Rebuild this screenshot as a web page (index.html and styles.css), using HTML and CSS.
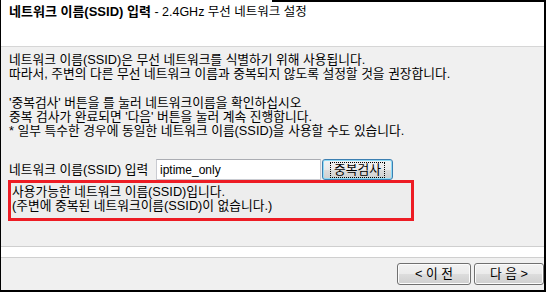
FILE: index.html
```html
<!DOCTYPE html>
<html lang="ko">
<head>
<meta charset="utf-8">
<link rel="stylesheet" href="styles.css">
</head>
<body>
<div class="window">
  <div class="header">
    <span class="title-b">네트워크 이름(SSID) 입력</span><span class="title-n"> - 2.4GHz 무선 네트워크 설정</span>
  </div>
  <div class="content">
    <p>네트워크 이름(SSID)은 무선 네트워크를 식별하기 위해 사용됩니다.<br>따라서, 주변의 다른 무선 네트워크 이름과 중복되지 않도록 설정할 것을 권장합니다.</p>
    <p>'중복검사' 버튼을 를 눌러 네트워크이름을 확인하십시오<br>중복 검사가 완료되면 '다음' 버튼을 눌러 계속 진행합니다.<br>* 일부 특수한 경우에 동일한 네트워크 이름(SSID)을 사용할 수도 있습니다.</p>
    <div class="ssid-row">
      <label class="ssid-label" for="ssid">네트워크 이름(SSID) 입력</label>
      <input class="ssid-input" id="ssid" type="text" value="iptime_only">
      <button class="btn btn-check" type="button"><span class="focus">중복검사</span></button>
    </div>
    <div class="result">사용가능한 네트워크 이름(SSID)입니다.<br>(주변에 중복된 네트워크이름(SSID)이 없습니다.)</div>
  </div>
  <div class="sep"></div>
  <div class="footer">
    <button class="btn btn-prev" type="button">&lt; 이 전</button>
    <button class="btn btn-next" type="button">다 음 &gt;</button>
  </div>
</div>
</body>
</html>
```
FILE: styles.css
```css
html, body {
  margin: 0;
  padding: 0;
  background: #ffffff;
}

.window {
  width: 546px;
  height: 292px;
  box-sizing: border-box;
  border-left: 1px solid #000;
  border-right: 2px solid #000;
  border-bottom: 2px solid #000;
  background: #f0f0f0;
  display: flex;
  flex-direction: column;
  overflow: hidden;
  font-family: "Liberation Sans", "Noto Sans CJK KR", sans-serif;
  font-size: 12.75px;
  color: #000;
}

.header {
  height: 47px;
  box-sizing: border-box;
  flex: 0 0 auto;
  background: #ffffff linear-gradient(to right, transparent 271px, #000 271px) no-repeat 0 0 / 100% 2px;
  border-bottom: 1px solid #d6d6d6;
  padding: 4px 0 0 8px;
  line-height: 15px;
  white-space: nowrap;
}

.title-b {
  font-weight: bold;
  font-size: 13px;
}

.title-n {
  font-size: 12.5px;
}

.content {
  flex: 1 1 auto;
  padding: 6px 0 0 8px;
}

.content p {
  margin: 0;
  line-height: 14px;
  white-space: nowrap;
}

.content p + p {
  margin-top: 15px;
}

.ssid-row {
  display: flex;
  align-items: center;
  height: 21px;
  margin-top: 21px;
}

.ssid-label {
  flex: 0 0 147px;
  line-height: 14px;
  white-space: nowrap;
}

.ssid-input {
  width: 165px;
  height: 21px;
  box-sizing: border-box;
  margin: 0;
  padding: 0 0 0 3px;
  border: 1px solid #c9cbd1;
  border-top-color: #abadb3;
  background: #ffffff;
  font-family: "Liberation Sans", sans-serif;
  font-size: 12px;
  color: #000;
  outline: none;
}

.btn {
  box-sizing: border-box;
  margin: 0;
  padding: 0;
  border: 1px solid #707070;
  border-radius: 3px;
  background: linear-gradient(#f2f2f2, #ebebeb 50%, #dddddd 50%, #cfcfcf);
  box-shadow: inset 0 0 0 1px #fcfcfc;
  font-family: inherit;
  font-size: 12.75px;
  color: #000;
  line-height: 14px;
}

.btn-check {
  width: 71px;
  height: 21px;
  margin-left: 1px;
  border-color: #3c7fb1;
  box-shadow: inset 0 0 0 1px #8fdcf7;
  display: flex;
  align-items: center;
  justify-content: center;
}

.focus {
  display: inline-block;
  border: 1px dotted #000;
  padding: 0 3px;
  line-height: 14px;
}

.result {
  width: 406px;
  height: 41px;
  box-sizing: border-box;
  margin-left: -1px;
  border: 3px solid #ed1c24;
  padding: 2px 1px;
  background: #ededed;
  line-height: 14px;
  white-space: nowrap;
}

.sep {
  flex: 0 0 auto;
  height: 12px;
  box-sizing: border-box;
  background: #ffffff;
  border-top: 1px solid #cfcfcf;
  border-bottom: 1px solid #cfcfcf;
}

.footer {
  flex: 0 0 32px;
  display: flex;
  justify-content: flex-end;
  align-items: flex-start;
  gap: 3px;
  padding-top: 5px;
  box-sizing: border-box;
}

.btn-prev {
  width: 74px;
  height: 22px;
}

.btn-next {
  width: 70px;
  height: 22px;
}
```
